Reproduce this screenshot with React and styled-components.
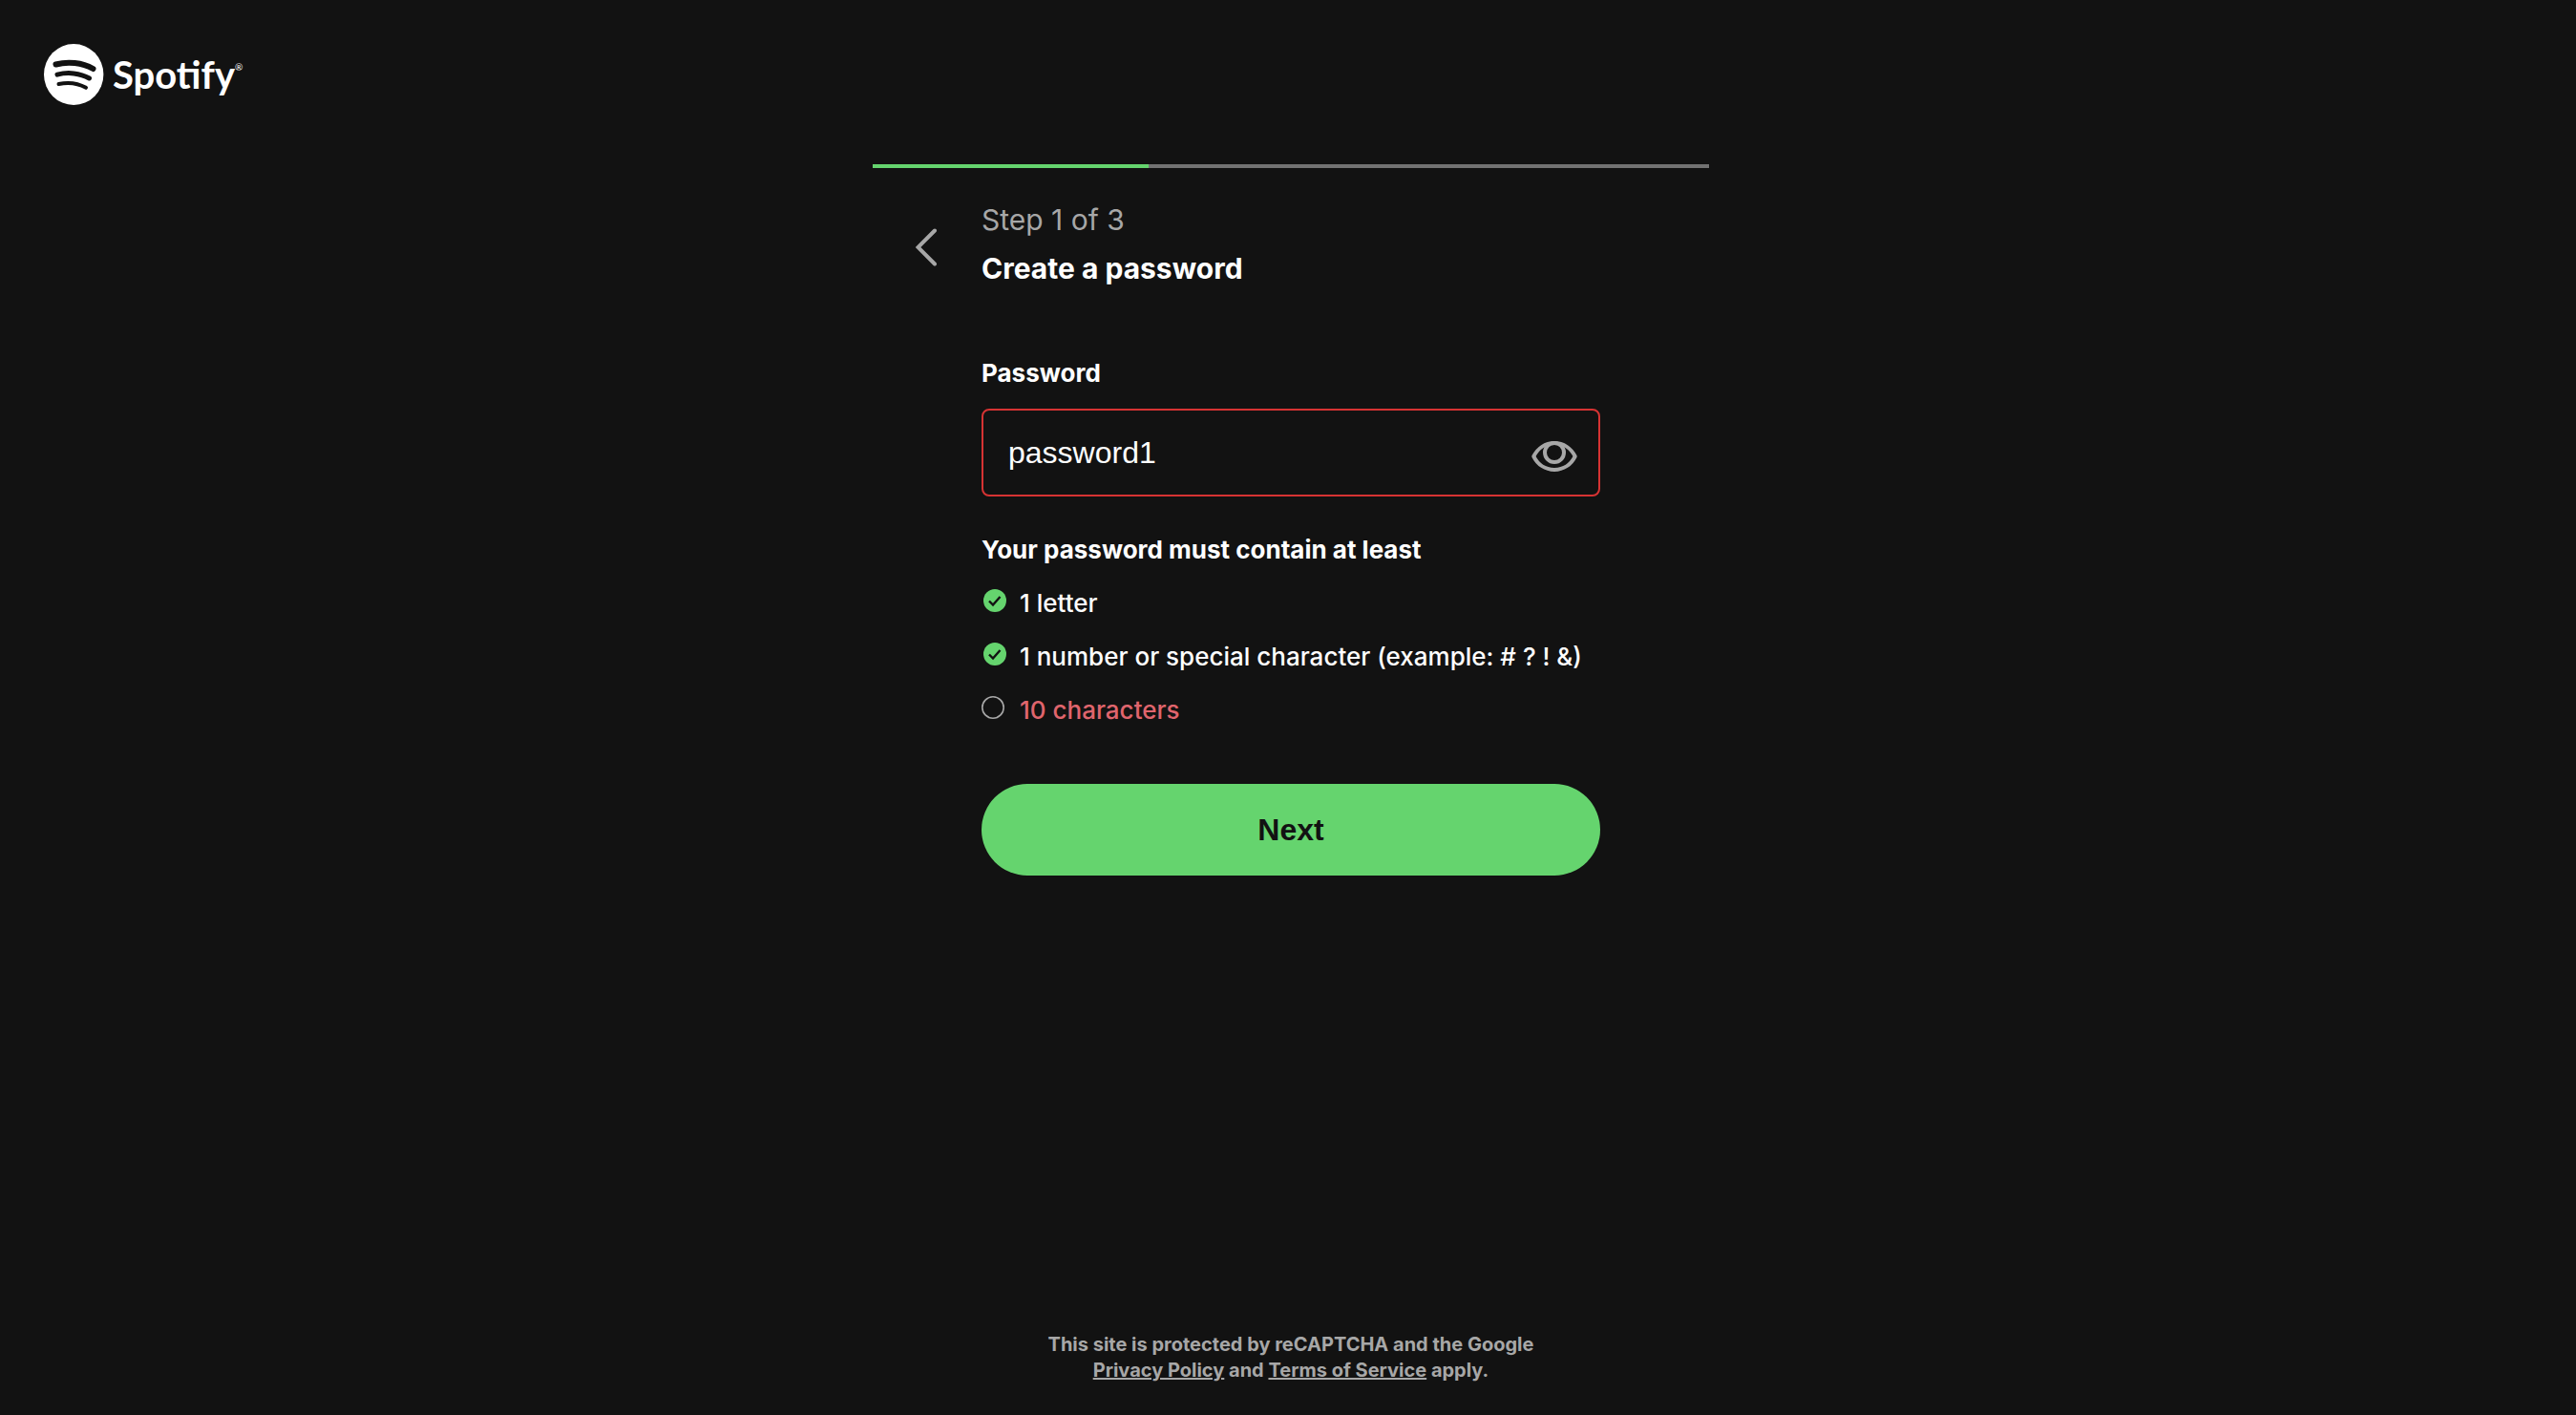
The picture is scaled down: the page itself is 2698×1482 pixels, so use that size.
import React, { useState } from 'react';
import styled, { createGlobalStyle } from 'styled-components';

const color = {
  background: '#121212',
  text: '#ffffff',
  subdued: '#a7a7a7',
  track: '#727272',
  accent: '#65d46e',
  border: '#d63333',
  negative: '#e0656d',
};

const GlobalStyle = createGlobalStyle`
  *, *::before, *::after { box-sizing: border-box; }
  body {
    margin: 0;
    background: ${color.background};
    color: ${color.text};
    font-family: Inter, "Liberation Sans", sans-serif;
  }
`;

const Page = styled.div`
  display: flex;
  flex-direction: column;
  min-height: 100vh;
  padding-left: 6px;
`;

const Header = styled.header`
  padding: 46px 40px 62px;
`;

const LogoLink = styled.a`
  display: inline-flex;
  align-items: center;
  gap: 8px;
  height: 64px;
  color: ${color.text};
  text-decoration: none;
  vertical-align: top;
`;

const Wordmark = styled.span`
  display: flex;
  font: 700 40px/48px Lato, sans-serif;
`;

const Registered = styled.span`
  font: 400 10px/32px Lato, sans-serif;
`;

const Main = styled.main`
  width: 100%;
  max-width: 876px;
  margin: 0 auto;
`;

const Track = styled.div`
  height: 4px;
  background: ${color.track};
`;

const TrackFill = styled.div`
  width: 33%;
  height: 100%;
  background: ${color.accent};
`;

const StepHeader = styled.div`
  display: grid;
  grid-template-columns: 114px 1fr;
  margin-top: 29px;
`;

const BackButton = styled.button`
  display: flex;
  align-items: center;
  justify-content: center;
  padding: 6px 0 0;
  border: 0;
  background: none;
  color: ${color.subdued};
  cursor: pointer;
`;

const StepCount = styled.p`
  margin: 0;
  color: ${color.subdued};
  font-size: 30px;
  line-height: 51px;
`;

const StepTitle = styled.h1`
  margin: 0;
  font-size: 30px;
  font-weight: 700;
  line-height: 51px;
`;

const Form = styled.form`
  display: flex;
  flex-direction: column;
  padding: 68px 114px 0;
`;

const Label = styled.label`
  font-size: 26px;
  font-weight: 700;
  line-height: 32px;
`;

const Field = styled.div`
  display: flex;
  align-items: center;
  height: 92px;
  margin-top: 21px;
  padding: 0 22px 0 26px;
  border: 2px solid ${color.border};
  border-radius: 8px;
`;

const Input = styled.input`
  flex: 1;
  min-width: 0;
  padding: 0;
  border: 0;
  outline: 0;
  background: none;
  color: ${color.text};
  font: 400 32px/40px "Liberation Sans", Arial, sans-serif;
`;

const RevealButton = styled.button`
  display: flex;
  padding: 8px 0 0;
  border: 0;
  background: none;
  color: ${color.subdued};
  cursor: pointer;
`;

const RulesTitle = styled.h2`
  margin: 40px 0 24px;
  font-size: 26px;
  font-weight: 700;
  line-height: 32px;
`;

const Rules = styled.ul`
  display: flex;
  flex-direction: column;
  gap: 24px;
  margin: 0;
  padding: 0;
  list-style: none;
`;

const Rule = styled.li`
  display: flex;
  gap: 12px;
  color: ${(p) => (p.$met ? color.text : color.negative)};
  font-size: 26px;
  font-weight: 500;
  line-height: 32px;
`;

const SubmitButton = styled.button`
  height: 96px;
  margin-top: 61px;
  border: 0;
  border-radius: 48px;
  background: ${color.accent};
  color: ${color.background};
  font: 700 32px/40px "Liberation Sans", Arial, sans-serif;
  cursor: pointer;
`;

const Footer = styled.footer`
  margin-top: auto;
  padding: 40px 0 33px;
  color: ${color.subdued};
  font-size: 20px;
  font-weight: 700;
  line-height: 27px;
  text-align: center;
`;

const FooterLink = styled.a`
  color: inherit;
  text-decoration: underline;
  text-decoration-thickness: 2px;
`;

const LogoMark = () => (
  <svg width="64" height="64" viewBox="0 0 64 64" aria-hidden="true">
    <ellipse cx="31.2" cy="32" rx="31.2" ry="32" fill="#fff" />
    <g fill="none" stroke={color.background} strokeLinecap="round">
      <path d="M12.5 21.5C25 18 40 19.5 51.500 26" strokeWidth="6" />
      <path d="M14 32.200C25 29.200 38 30.500 47.500 36" strokeWidth="5" />
      <path d="M15.500 42C25 40 35.500 41 44 45.800" strokeWidth="4" />
    </g>
  </svg>
);

const ChevronLeft = () => (
  <svg width="24" height="40" viewBox="0 0 24 40" fill="none" stroke="currentColor" strokeWidth="4" strokeLinecap="round">
    <path d="M20 2.500 2.500 20 20 37.500" />
  </svg>
);

const Eye = () => (
  <svg width="48" height="36" viewBox="0 0 48 36" fill="none" stroke="currentColor" strokeWidth="4" strokeLinejoin="round">
    <path d="M2.300 18C6.500 9.500 14.500 4 24 4s17.500 5.500 21.700 14C41.500 26.500 33.500 32 24 32S6.500 26.500 2.300 18Z" />
    <circle cx="24" cy="14" r="10" />
  </svg>
);

const RuleIcon = ({ met }) => (
  <svg width="28" height="26" viewBox="0 0 28 26" fill="none" aria-hidden="true">
    {met ? (
      <>
        <circle cx="14" cy="13" r="12" fill={color.accent} />
        <path d="m8 13.500 4 4 7.500-8.500" stroke={color.background} strokeWidth="2.400" />
      </>
    ) : (
      <circle cx="12" cy="13" r="11.200" stroke={color.subdued} strokeWidth="1.600" />
    )}
  </svg>
);

const rules = [
  { text: '1 letter', test: (v) => /[a-z]/i.test(v) },
  { text: '1 number or special character (example: # ? ! &)', test: (v) => /[^a-z]/i.test(v) },
  { text: '10 characters', test: (v) => v.length >= 10 },
];

export default function App() {
  const [password, setPassword] = useState('password1');
  const [visible, setVisible] = useState(true);

  return (
    <Page>
      <GlobalStyle />
      <Header>
        <LogoLink href="#home" aria-label="Spotify">
          <LogoMark />
          <Wordmark>
            Spotify<Registered>®</Registered>
          </Wordmark>
        </LogoLink>
      </Header>
      <Main>
        <Track role="progressbar" aria-label="Sign up progress" aria-valuenow={33} aria-valuemin={0} aria-valuemax={100}>
          <TrackFill />
        </Track>
        <StepHeader>
          <BackButton type="button" aria-label="Back">
            <ChevronLeft />
          </BackButton>
          <div>
            <StepCount>Step 1 of 3</StepCount>
            <StepTitle>Create a password</StepTitle>
          </div>
        </StepHeader>
        <Form onSubmit={(e) => e.preventDefault()}>
          <Label htmlFor="new-password">Password</Label>
          <Field>
            <Input
              id="new-password"
              type={visible ? 'text' : 'password'}
              value={password}
              onChange={(e) => setPassword(e.target.value)}
              spellCheck={false}
              autoComplete="off"
            />
            <RevealButton type="button" aria-label="Toggle password visibility" onClick={() => setVisible(!visible)}>
              <Eye />
            </RevealButton>
          </Field>
          <RulesTitle>Your password must contain at least</RulesTitle>
          <Rules>
            {rules.map((rule) => {
              const met = rule.test(password);
              return (
                <Rule key={rule.text} $met={met}>
                  <RuleIcon met={met} />
                  {rule.text}
                </Rule>
              );
            })}
          </Rules>
          <SubmitButton type="submit">Next</SubmitButton>
        </Form>
      </Main>
      <Footer>
        This site is protected by reCAPTCHA and the Google
        <br />
        <FooterLink href="#privacy">Privacy Policy</FooterLink> and <FooterLink href="#terms">Terms of Service</FooterLink> apply.
      </Footer>
    </Page>
  );
}
